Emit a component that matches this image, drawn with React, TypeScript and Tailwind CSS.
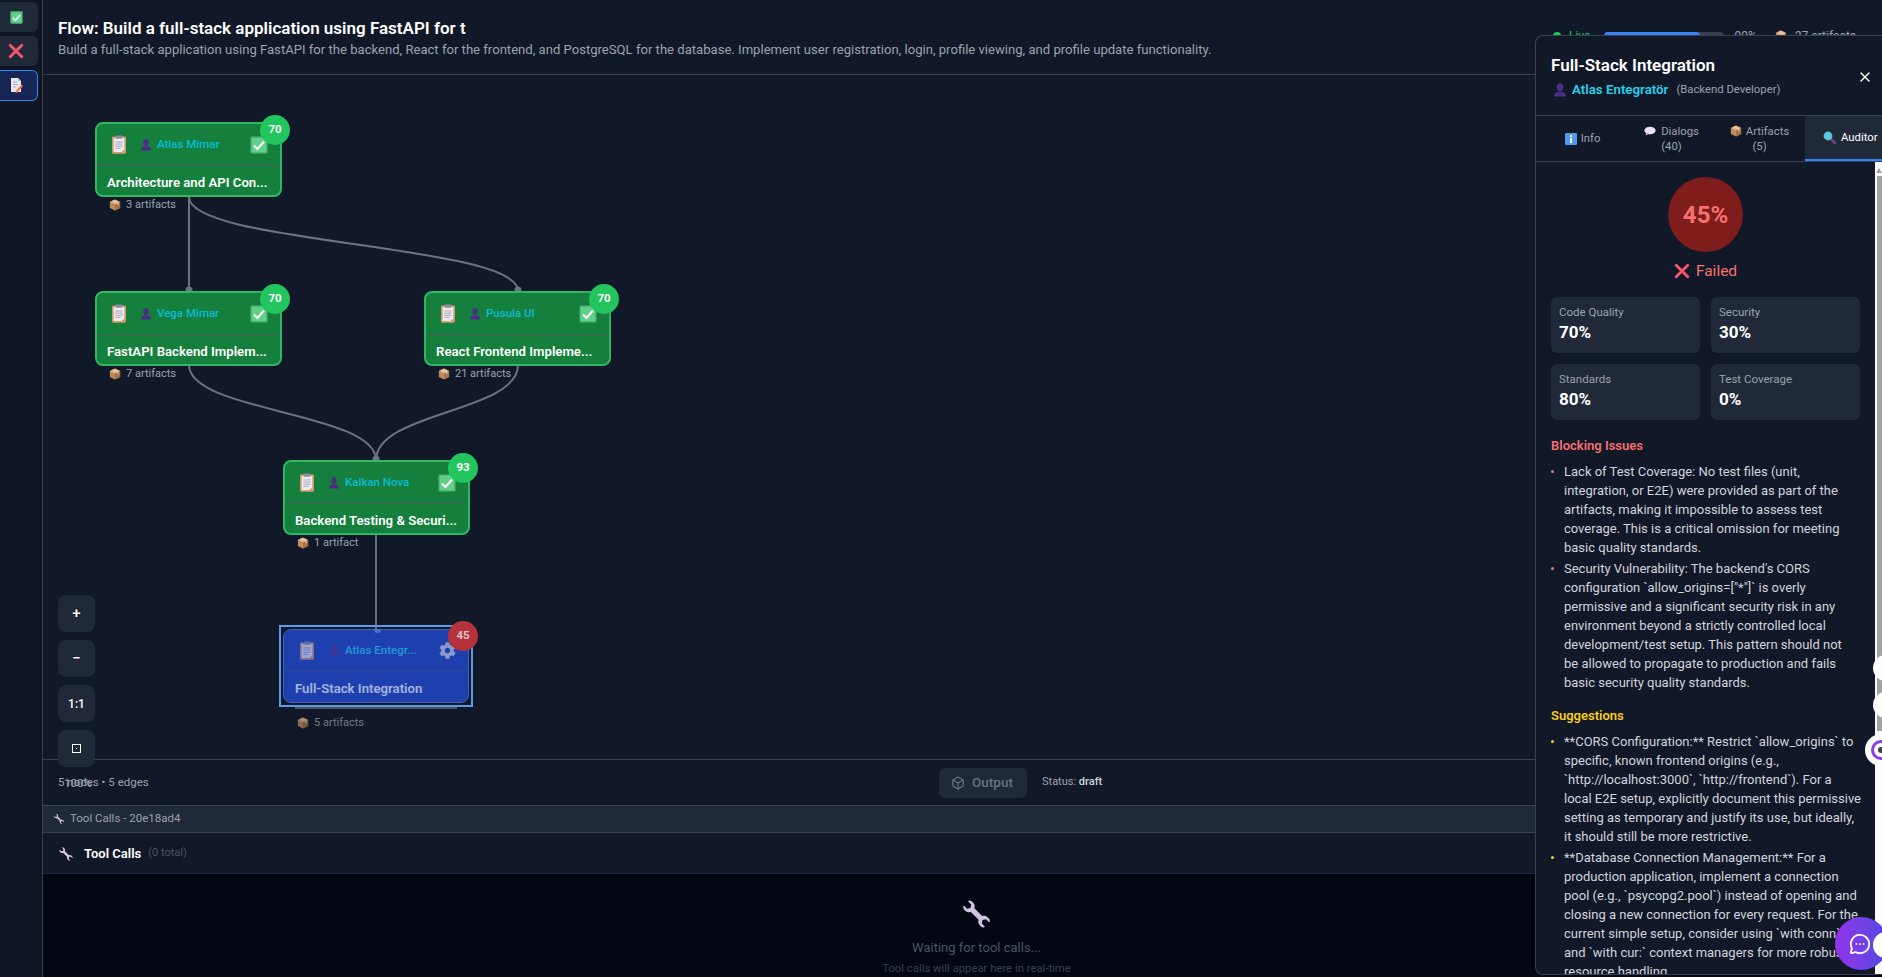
import { Box, MessageCircleMore, X as CloseIcon } from "lucide-react";
import { FaCog } from "react-icons/fa";

function CheckEmoji({ size = 18 }: { size?: number }) {
  return (
    <svg width={size} height={size} viewBox="0 0 18 18">
      <rect x="0.5" y="0.5" width="17" height="17" rx="1.5" fill="#4fb877" />
      <rect x="2" y="2" width="14" height="14" rx="1" fill="#5fcf8a" />
      <path d="M4 9.5 L7.5 13 L14 5.5" fill="none" stroke="#ffffff" strokeWidth="2" />
    </svg>
  );
}

function CrossEmoji({ size = 18 }: { size?: number }) {
  return (
    <svg width={size} height={size} viewBox="0 0 18 18">
      <path d="M2.5 2.5 L15.5 15.5 M15.5 2.5 L2.5 15.5" stroke="#f4566f" strokeWidth="3.2" strokeLinecap="round" />
    </svg>
  );
}

function MemoEmoji() {
  return (
    <svg width="14" height="17" viewBox="0 0 14 17">
      <path d="M2 1 H9 L12 4 V15 H2 Z" fill="#e8e6f0" />
      <path d="M9 1 V4 H12 Z" fill="#b9b6c9" />
      <path d="M4 5 H8 M4 7.5 H9 M4 10 H7" stroke="#a9a6ba" strokeWidth="1" />
      <path d="M7 14 L12.5 7.5 L14 9 L8.5 15.5 L6.5 16 Z" fill="#f0783c" />
    </svg>
  );
}

function ClipboardEmoji({ size = 16 }: { size?: number }) {
  return (
    <svg width={size} height={size * 1.2} viewBox="0 0 15 18">
      <rect x="1" y="1.5" width="13" height="16" rx="1" fill="#d99a6c" />
      <rect x="2.5" y="3" width="10" height="13" fill="#eceaf2" />
      <path d="M4 6.5 H11 M4 8.5 H11 M4 10.5 H11 M4 12.5 H9" stroke="#a8a6b6" strokeWidth="0.9" />
      <rect x="4.5" y="0.5" width="6" height="3" rx="0.6" fill="#8f8d9e" />
      <path d="M10 16 L12.5 13.5 V16 Z" fill="#c98d63" />
    </svg>
  );
}

function PersonEmoji({ size = 12 }: { size?: number }) {
  return (
    <svg width={size} height={size} viewBox="0 0 14 14">
      <ellipse cx="7" cy="4.2" rx="3.2" ry="3.9" fill="#4c2d85" />
      <path d="M1 13.5 C1 9.8 4 8.6 7 8.6 C10 8.6 13 9.8 13 13.5 Z" fill="#4c2d85" />
    </svg>
  );
}

function PackageEmoji({ size = 12 }: { size?: number }) {
  return (
    <svg width={size} height={size} viewBox="0 0 14 14">
      <path d="M7 0.5 L13 3.5 V10.5 L7 13.5 L1 10.5 V3.5 Z" fill="#c08a5c" />
      <path d="M1 3.5 L7 6.5 L13 3.5 L7 0.5 Z" fill="#e2b58a" />
      <path d="M7 6.5 V13.5 L13 10.5 V3.5 Z" fill="#a3714a" />
      <path d="M3.8 2.1 L9.8 5.1 V7.5 L11 6.9 V4.5 L5 1.5 Z" fill="#f0d6b8" />
    </svg>
  );
}

function InfoEmoji() {
  return (
    <svg width="12" height="12" viewBox="0 0 12 12">
      <rect width="12" height="12" rx="1" fill="#4f9be8" />
      <rect x="5" y="2" width="2" height="2" fill="#ffffff" />
      <rect x="5" y="5" width="2" height="5" fill="#ffffff" />
    </svg>
  );
}

function SpeechEmoji() {
  return (
    <svg width="12" height="10" viewBox="0 0 12 10">
      <ellipse cx="6" cy="4.5" rx="5.6" ry="3.8" fill="#e8e0f4" />
      <path d="M2.5 7 L1.5 9.5 L5 8 Z" fill="#c9bde0" />
    </svg>
  );
}

function MagnifierEmoji() {
  return (
    <svg width="13" height="13" viewBox="0 0 13 13">
      <path d="M7.5 7.5 L12 12" stroke="#7a4a9a" strokeWidth="2.2" strokeLinecap="round" />
      <circle cx="5" cy="5" r="4.4" fill="#5cc6e0" />
    </svg>
  );
}

function WrenchEmoji({ size = 16, color = "#cfc4e4" }: { size?: number; color?: string }) {
  return (
    <svg width={size} height={size} viewBox="0 0 32 32">
      <path
        transform="rotate(-45 16 16)"
        fill={color}
        d="M13.5 10.5 C10 9 9.5 4 11.5 1.5 L13 1 L13 5.5 L16 7.5 L19 5.5 L19 1 L20.5 1.5 C22.5 4 22 9 18.5 10.5 L18.5 21.5 C22 23 22.5 28 20.5 30.5 L19 31 L19 26.5 L16 24.5 L13 26.5 L13 31 L11.5 30.5 C9.5 28 10 23 13.5 21.5 Z"
      />
    </svg>
  );
}

interface FlowNodeProps {
  pos: string;
  agent: string;
  title: string;
  score: number;
  artifacts: string;
}

function FlowNode({ pos, agent, title, score, artifacts }: FlowNodeProps) {
  return (
    <div className={`absolute w-[187px] ${pos}`}>
      <div className="relative h-[75px] rounded-lg border-2 border-[#2fb863] bg-[#15803d]">
        <div className="flex h-[42px] items-center border-b border-[#4b5563] pl-[14px] pr-[12px]">
          <ClipboardEmoji />
          <span className="ml-[13px]"><PersonEmoji /></span>
          <span className="ml-[5px] flex-1 text-[11.5px] font-medium text-[#0abcd8]">{agent}</span>
          <CheckEmoji />
        </div>
        <div className="truncate pl-[10px] pt-[7px] text-[13.2px] font-semibold text-white">{title}</div>
        <div className="absolute right-[-10px] top-[-9px] flex h-[30px] w-[30px] items-center justify-center rounded-full bg-[#22c55e] text-[11.5px] font-bold text-white">
          {score}
        </div>
      </div>
      <div className="flex items-center gap-[5px] pl-[14px] text-[11px] leading-[15px] text-[#9ca3af]">
        <PackageEmoji />
        {artifacts}
      </div>
    </div>
  );
}

function SelectedNode() {
  return (
    <div className="absolute left-[236px] top-[550px] w-[194px]">
      <div className="h-[82px] border-[2px] border-[#5b9be8] p-[2px]">
        <div className="relative h-[74px] rounded-lg border border-[#3a62b8] bg-[#1e40af]">
          <div className="absolute left-[90px] top-[-1px] h-[4px] w-[7px] rounded-b-full bg-[#3f73d8]" />
          <div className="flex h-[42px] items-center border-b border-[#374a80] pl-[15px] pr-[12px] opacity-60">
            <ClipboardEmoji />
            <span className="ml-[13px]"><PersonEmoji /></span>
            <span className="ml-[5px] flex-1 text-[11.5px] font-medium text-[#22d3ee]">Atlas Entegr...</span>
            <FaCog size={17} className="text-[#d1d5db]" />
          </div>
          <div className="truncate pl-[11px] pt-[7px] text-[13.2px] font-semibold text-white opacity-60">Full-Stack Integration</div>
          <div className="absolute right-[-10px] top-[-9px] flex h-[30px] w-[30px] items-center justify-center rounded-full bg-[#b5323c] text-[11.5px] font-bold text-[#d6c4c6]">
            45
          </div>
        </div>
      </div>
      <div className="mx-[16px] h-[2px] bg-[#4b5563]" />
      <div className="flex items-center gap-[5px] pl-[18px] pt-[6px] text-[11px] leading-[16px] text-[#9ca3af] opacity-70">
        <PackageEmoji />
        5 artifacts
      </div>
    </div>
  );
}

function FlowEdges() {
  return (
    <svg className="absolute left-0 top-0 h-[684px] w-[700px]" fill="none" stroke="#6b7280" strokeWidth="2">
      <path d="M146 122 L146 216" />
      <path d="M146 122 C146 169 475 169 475 216" />
      <path d="M146 290 C146 337 333 337 333 385" />
      <path d="M475 290 C475 337 333 337 333 385" />
      <path d="M333 460 L333 554" />
      <circle cx="146" cy="215" r="3.5" fill="#6b7280" stroke="none" />
      <circle cx="475" cy="215" r="3.5" fill="#6b7280" stroke="none" />
      <circle cx="333" cy="384" r="3.5" fill="#6b7280" stroke="none" />
    </svg>
  );
}

function ZoomControls() {
  const itemClass = "flex h-[37px] w-[37px] items-center justify-center rounded-lg bg-[#1f2937] text-[12px] font-medium text-white";
  return (
    <div className="absolute left-[15px] top-[520px] z-10 flex flex-col gap-[8px]">
      <div className={itemClass}><span className="text-[15px]">+</span></div>
      <div className={itemClass}><span className="text-[15px]">−</span></div>
      <div className={itemClass}>1:1</div>
      <div className={itemClass}>
        <span className="flex h-[9px] w-[9px] items-center justify-center border border-white">
          <span className="h-[1px] w-[1px] bg-white" />
        </span>
      </div>
    </div>
  );
}

function MetricCard({ label, value }: { label: string; value: string }) {
  return (
    <div className="h-[56px] rounded-md bg-[#1f2937] px-[8px] pt-[7px]">
      <div className="text-[11.5px] leading-[16px] text-[#9ca3af]">{label}</div>
      <div className="text-[17px] font-bold leading-[25px] text-white">{value}</div>
    </div>
  );
}

const BLOCKING = [
  [
    "Lack of Test Coverage: No test files (unit,",
    "integration, or E2E) were provided as part of the",
    "artifacts, making it impossible to assess test",
    "coverage. This is a critical omission for meeting",
    "basic quality standards.",
  ],
  [
    "Security Vulnerability: The backend's CORS",
    'configuration `allow_origins=["*"]` is overly',
    "permissive and a significant security risk in any",
    "environment beyond a strictly controlled local",
    "development/test setup. This pattern should not",
    "be allowed to propagate to production and fails",
    "basic security quality standards.",
  ],
];

const SUGGESTIONS = [
  [
    "**CORS Configuration:** Restrict `allow_origins` to",
    "specific, known frontend origins (e.g.,",
    "`http://localhost:3000`, `http://frontend`). For a",
    "local E2E setup, explicitly document this permissive",
    "setting as temporary and justify its use, but ideally,",
    "it should still be more restrictive.",
  ],
  [
    "**Database Connection Management:** For a",
    "production application, implement a connection",
    "pool (e.g., `psycopg2.pool`) instead of opening and",
    "closing a new connection for every request. For the",
    "current simple setup, consider using `with conn`",
    "and `with cur:` context managers for more robust",
    "resource handling.",
  ],
];

function BulletList({ items, bullet }: { items: string[][]; bullet: string }) {
  return (
    <ul className="flex flex-col gap-[2px]">
      {items.map((lines) => (
        <li key={lines[0]} className="flex text-[13px] leading-[19px] text-[#d1d5db]">
          <span className={`mt-[8px] h-[3px] w-[3px] shrink-0 rounded-full ${bullet}`} />
          <span className="ml-[10px]">
            {lines.map((line) => (
              <span key={line} className="block whitespace-nowrap">{line}</span>
            ))}
          </span>
        </li>
      ))}
    </ul>
  );
}

function DetailPanel() {
  return (
    <div className="absolute bottom-[2px] right-0 top-[35px] z-20 flex w-[347px] flex-col overflow-hidden rounded-l-lg border border-r-0 border-[#374151] bg-[#111827]">
      <div className="relative h-[80px] shrink-0 border-b border-[#374151] px-[15px] pt-[17px]">
        <div className="text-[17px] font-semibold leading-[24px] text-white">Full-Stack Integration</div>
        <div className="mt-[3px] flex items-center">
          <span className="ml-[2px]"><PersonEmoji size={14} /></span>
          <span className="ml-[5px] text-[13.3px] font-semibold text-[#22d3ee]">Atlas Entegratör</span>
          <span className="ml-[8px] text-[11.3px] text-[#9ca3af]">(Backend Developer)</span>
        </div>
        <CloseIcon size={16} className="absolute right-[9px] top-[33px] text-white" />
      </div>

      <div className="flex h-[46px] shrink-0 border-b border-[#374151] text-[11.3px] leading-[15px] text-[#9ca3af]">
        <div className="flex w-[93px] shrink-0 items-center justify-center gap-[4px]">
          <InfoEmoji /> Info
        </div>
        <div className="flex w-[85px] shrink-0 flex-col items-center justify-center">
          <span className="flex items-center gap-[5px]"><SpeechEmoji /> Dialogs</span>
          <span>(40)</span>
        </div>
        <div className="flex w-[91px] shrink-0 flex-col items-center justify-center">
          <span className="flex items-center gap-[4px]"><PackageEmoji /> Artifacts</span>
          <span>(5)</span>
        </div>
        <div className="flex w-[90px] shrink-0 items-center gap-[5px] border-b-2 border-[#3b82f6] bg-[#1f2937] pl-[18px] text-white">
          <MagnifierEmoji /> Auditor
        </div>
      </div>

      <div className="flex min-h-0 flex-1">
        <div className="min-w-0 flex-1 overflow-hidden px-[15px] pt-[15px]">
          <div className="mx-auto flex h-[75px] w-[75px] items-center justify-center rounded-full bg-[#7f1d1d] text-[24px] font-bold text-[#f87171]">
            45%
          </div>
          <div className="mt-[8px] flex items-center justify-center gap-[6px] text-[15.5px] leading-[22px] text-[#f87171]">
            <CrossEmoji size={16} /> Failed
          </div>
          <div className="mt-[15px] grid grid-cols-2 gap-x-[11px] gap-y-[11px]">
            <MetricCard label="Code Quality" value="70%" />
            <MetricCard label="Security" value="30%" />
            <MetricCard label="Standards" value="80%" />
            <MetricCard label="Test Coverage" value="0%" />
          </div>
          <div className="mb-[6px] mt-[16px] text-[13px] font-semibold leading-[20px] text-[#f87171]">Blocking Issues</div>
          <BulletList items={BLOCKING} bullet="bg-[#f87171]" />
          <div className="mb-[6px] mt-[14px] text-[13px] font-semibold leading-[20px] text-[#facc15]">Suggestions</div>
          <BulletList items={SUGGESTIONS} bullet="bg-[#facc15]" />
        </div>
        <div className="flex w-[7px] shrink-0 flex-col items-end bg-white pt-[6px]">
          <div className="mb-[3px] h-0 w-0 self-center border-x-[3px] border-b-[5px] border-x-transparent border-b-[#9ca3af]" />
          <div className="h-[555px] w-[5px] bg-[#a3a3a3]" />
        </div>
      </div>
    </div>
  );
}

function FloatingButtons() {
  return (
    <>
      <div className="absolute left-[1873px] top-[655px] z-30 h-[26px] w-[26px] rounded-full bg-white" />
      <div className="absolute left-[1873px] top-[692px] z-30 h-[26px] w-[26px] rounded-full bg-white" />
      <div className="absolute left-[1865px] top-[734px] z-30 flex h-[32px] w-[32px] items-center justify-center rounded-full bg-white">
        <span className="flex h-[20px] w-[20px] items-center justify-center rounded-full border-[3px] border-[#8b3fe8]">
          <span className="h-[6px] w-[6px] rounded-full bg-[#374151]" />
        </span>
      </div>
      <div className="absolute left-[1835px] top-[917px] z-30 flex h-[53px] w-[53px] items-center justify-center rounded-full bg-gradient-to-r from-[#9333ea] to-[#4f46e5] pr-[3px]">
        <MessageCircleMore size={22} className="text-white" />
      </div>
      <div className="absolute left-[1873px] top-[932px] z-30 h-[26px] w-[26px] rounded-full bg-white" />
    </>
  );
}

export default function App() {
  return (
    <div
      className="relative flex h-[977px] w-[1882px] overflow-hidden bg-[#111827] text-white"
      style={{ fontFamily: 'Roboto, "Noto Sans", sans-serif' }}
    >
      <aside className="flex w-[43px] shrink-0 flex-col gap-[4px] border-r border-[#374151] bg-[#0f1623] pt-[2px]">
        <div className="flex h-[30px] w-[38px] items-center justify-center rounded-r-md bg-[#1f2937] pr-[6px] pt-[1px]">
          <CheckEmoji size={13} />
        </div>
        <div className="flex h-[30px] w-[38px] items-center justify-center rounded-r-md bg-[#1f2937] pr-[6px]">
          <CrossEmoji size={16} />
        </div>
        <div className="flex h-[31px] w-[38px] items-center justify-center rounded-r-md border border-l-0 border-[#3b82f6] bg-[#172554] pr-[6px]">
          <MemoEmoji />
        </div>
      </aside>

      <main className="flex min-w-0 flex-1 flex-col">
        <header className="flex h-[75px] shrink-0 justify-between border-b border-[#374151] pl-[15px]">
          <div className="pt-[16px]">
            <h1 className="text-[17px] font-semibold leading-[24px]">Flow: Build a full-stack application using FastAPI for t</h1>
            <p className="text-[13.1px] leading-[19px] text-[#9ca3af]">
              Build a full-stack application using FastAPI for the backend, React for the frontend, and PostgreSQL for the database. Implement user registration, login, profile viewing, and profile update functionality.
            </p>
          </div>
          <div className="mr-[26px] mt-[28px] flex h-[16px] items-center gap-[8px] text-[12px] text-[#9ca3af]">
            <span className="h-[8px] w-[8px] rounded-full bg-[#22c55e]" />
            <span className="mr-[6px] text-[#22c55e]">Live</span>
            <div className="h-[8px] w-[120px] rounded-full bg-[#374151]">
              <div className="h-[8px] w-[96px] rounded-full bg-[#3b82f6]" />
            </div>
            <span className="ml-[2px] mr-[10px]">99%</span>
            <PackageEmoji />
            <span>27 artifacts</span>
          </div>
        </header>

        <section className="relative h-[684px] shrink-0">
          <FlowEdges />
          <FlowNode pos="left-[52px] top-[47px]" agent="Atlas Mimar" title="Architecture and API Con..." score={70} artifacts="3 artifacts" />
          <FlowNode pos="left-[52px] top-[216px]" agent="Vega Mimar" title="FastAPI Backend Implem..." score={70} artifacts="7 artifacts" />
          <FlowNode pos="left-[381px] top-[216px]" agent="Pusula UI" title="React Frontend Impleme..." score={70} artifacts="21 artifacts" />
          <FlowNode pos="left-[240px] top-[385px]" agent="Kalkan Nova" title="Backend Testing & Securi..." score={93} artifacts="1 artifact" />
          <SelectedNode />
          <ZoomControls />
          <span className="absolute left-[21px] top-[700px] z-10 text-[11.5px] text-[#9ca3af]">100%</span>
        </section>

        <div className="flex h-[46px] shrink-0 items-center border-t border-[#374151] pl-[15px]">
          <span className="w-[881px] text-[11.5px] text-[#9ca3af]">5 nodes • 5 edges</span>
          <div className="flex h-[30px] w-[88px] items-center justify-center gap-[7px] rounded-md bg-[#1f2937] pr-[2px] text-[13.5px] font-medium text-[#6b7280]">
            <Box size={14} /> Output
          </div>
          <span className="ml-[15px] text-[11px] text-[#9ca3af]">
            Status: <span className="font-medium text-[#d1d5db]">draft</span>
          </span>
        </div>

        <div className="flex h-[28px] shrink-0 items-center gap-[5px] border-y border-[#374151] bg-[#1f2937] pl-[10px] text-[11.5px] text-[#9ca3af]">
          <WrenchEmoji size={12} /> Tool Calls - 20e18ad4
        </div>

        <div className="flex h-[41px] shrink-0 items-center border-b border-[#1f2937] pl-[15px] pt-[1px]">
          <WrenchEmoji size={16} />
          <span className="ml-[10px] text-[13px] font-semibold">Tool Calls</span>
          <span className="ml-[7px] text-[11px] text-[#4b5563]">(0 total)</span>
        </div>

        <div className="flex min-h-0 flex-1 flex-col items-center overflow-hidden bg-[#030712] pl-[28px] pt-[24px]">
          <WrenchEmoji size={33} />
          <div className="mt-[8px] text-[13px] leading-[20px] text-[#4b5563]">Waiting for tool calls...</div>
          <div className="mt-[3px] text-[11.3px] leading-[16px] text-[#374151]">Tool calls will appear here in real-time</div>
        </div>
      </main>

      <DetailPanel />
      <FloatingButtons />
    </div>
  );
}
